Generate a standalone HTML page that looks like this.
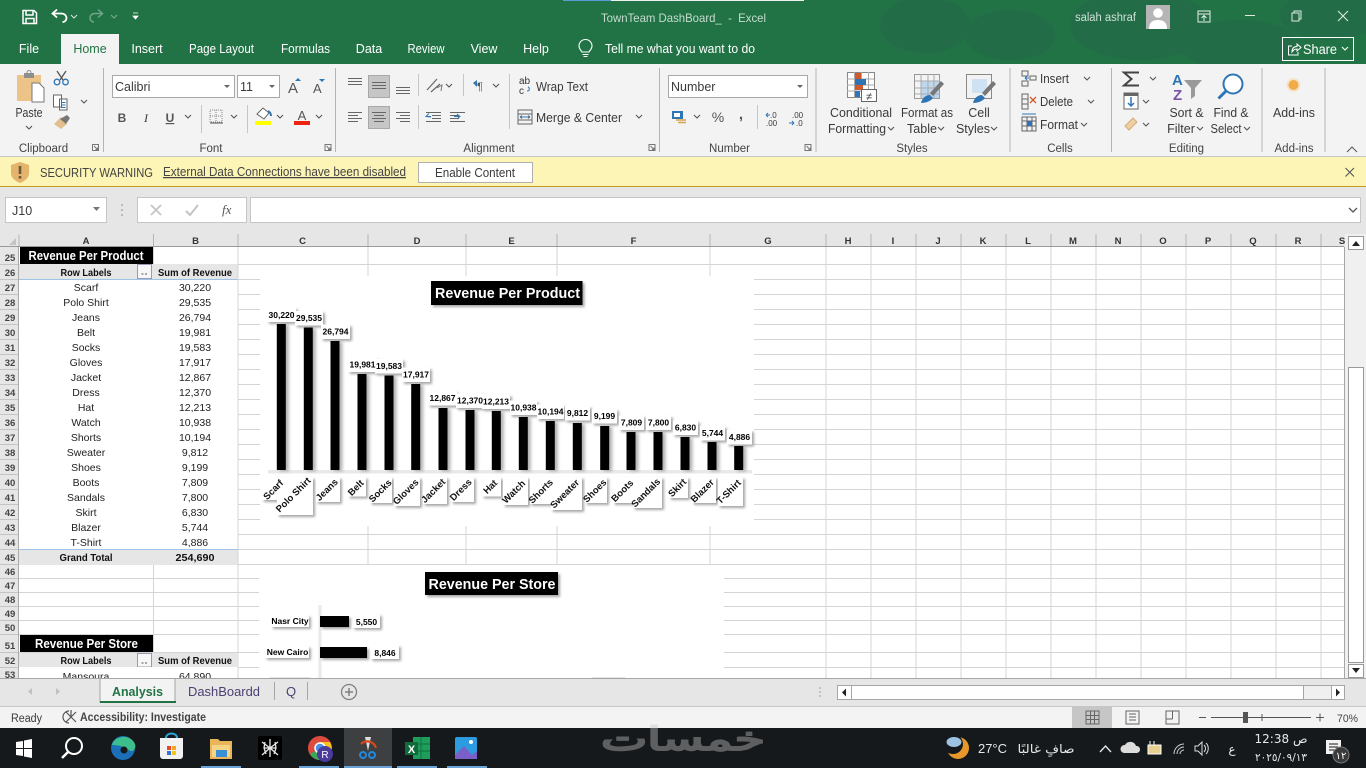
<!DOCTYPE html>
<html><head><meta charset="utf-8"><title>TownTeam DashBoard_ - Excel</title>
<style>
html,body{margin:0;padding:0;background:#e6e6e6;width:1366px;height:768px;overflow:hidden}
svg{position:absolute;left:0;top:0;display:block}
text{font-family:"Liberation Sans",sans-serif;font-size:12.5px;fill:#3a3a3a;white-space:pre}
.m{text-anchor:middle}
.e{text-anchor:end}
.w{fill:#fff}
.tab{font-size:12.5px;fill:#fff;text-anchor:middle}
.g{font-size:11.5px;fill:#444;text-anchor:middle}
.r{font-size:9.5px;fill:#444;text-anchor:middle;font-weight:bold}
.c{font-size:9.5px;fill:#333;text-anchor:middle;font-weight:bold}
.d{font-size:10.5px;fill:#222;text-anchor:middle}
.h{font-size:10px;fill:#111;text-anchor:middle;font-weight:bold}
.l{font-size:8.5px;fill:#000;text-anchor:middle;font-weight:bold}
.x{font-size:9.5px;fill:#111;text-anchor:middle;font-weight:bold}
.ic{fill:none;stroke:#666;stroke-width:1}
.ch{fill:none;stroke:#555;stroke-width:1.1}
.wh{fill:none;stroke:#fff;stroke-width:1.2}
.ar{font-family:"DejaVu Sans",sans-serif}
</style></head><body>
<svg width="1366" height="768" viewBox="0 0 1366 768" xmlns="http://www.w3.org/2000/svg">
<defs>
<filter id="s" x="-30%" y="-30%" width="170%" height="170%"><feDropShadow dx="2" dy="2" stdDeviation="1.2" flood-color="#000" flood-opacity=".35"/></filter>
<filter id="b" x="-30%" y="-10%" width="180%" height="120%"><feDropShadow dx="3" dy="1" stdDeviation="1.5" flood-color="#000" flood-opacity=".3"/></filter>
<clipPath id="ct"><rect x="590" y="728" width="190" height="40"/></clipPath>
<clipPath id="cs"><rect x="590" y="707" width="190" height="21"/></clipPath>
<path id="cv" d="M0 0l3 3 3-3" fill="none" stroke="#555" stroke-width="1.1"/>
<path id="cw" d="M0 0l3 3 3-3" fill="none" stroke="#fff" stroke-width="1.1"/>
</defs>

<!-- Title bar -->
<rect width="1366" height="64" fill="#217346"/>
<g fill="#226c47">
<ellipse cx="925" cy="25" rx="45" ry="28"/><ellipse cx="1010" cy="35" rx="45" ry="25"/><ellipse cx="1140" cy="25" rx="70" ry="35"/><ellipse cx="1240" cy="45" rx="60" ry="25"/><ellipse cx="1330" cy="15" rx="50" ry="25"/>
</g>
<rect x="563" y="0" width="48" height="1" fill="#5b9bd5"/><rect x="611" y="0" width="193" height="1" fill="#f0f0f0"/>
<!-- QAT -->
<path d="M23 10.500h11l2.500 2.500v10.500h-13.500z M26 10.500v4.500h7v-4.500 M26 23.500v-5h8v5" fill="none" stroke="#fff" stroke-width="1.500"/>
<path d="M56 11.500l-4.500 4 4.500 4 M52 15.500h8c4 0 5.500 2.500 5.500 4.500s-1.500 4-4 4" fill="none" stroke="#fff" stroke-width="1.800" transform="translate(1,-2)"/>
<use href="#cw" x="71" y="15" opacity=".8"/>
<path d="M98 11.500l4.500 4-4.500 4 M102 15.500h-7c-3.500 0-5 2.500-5 4.500s1.500 4 4 4" fill="none" stroke="#6fa588" stroke-width="1.500" transform="translate(0,-2)"/>
<use href="#cw" x="111" y="15" opacity=".4"/>
<path d="M133 13h5M133 16h5l-2.500 3z" fill="#fff" stroke="#fff" stroke-width=".8"/>
<text x="601" y="22" textLength="165" lengthAdjust="spacingAndGlyphs" style="font-size:12px;fill:#c6dccf">TownTeam DashBoard_  -  Excel</text>
<text x="1075" y="21" textLength="61" lengthAdjust="spacingAndGlyphs" style="font-size:11.500px;fill:#cfe0d6">salah ashraf</text>
<rect x="1146" y="5" width="24" height="24" fill="#b5b5b5"/>
<circle cx="1158" cy="13" r="4.800" fill="#fff"/><path d="M1149 29c0-7 4-9 9-9s9 2 9 9z" fill="#fff"/>
<path d="M1198 11h12v11h-12zM1198 14h12M1204 21v-5M1201.500 18l2.500-2.500 2.500 2.500" fill="none" stroke="#e6efe9" stroke-width="1"/>
<path d="M1245 15.500h10" stroke="#dfeae3" stroke-width="1"/>
<path d="M1292 13h7v8h-7zM1294 13v-2h7v8h-2" fill="none" stroke="#dfeae3" stroke-width="1"/>
<path d="M1338 11l10 10M1348 11l-10 10" stroke="#dfeae3" stroke-width="1.100"/>

<!-- Tabs -->
<rect x="61" y="34" width="58" height="30" fill="#f3f3f3"/>
<text class="tab" x="29" y="53" >File</text>
<text class="tab" x="90" y="53" style="fill:#217346">Home</text>
<text class="tab" x="147" y="53">Insert</text>
<text class="tab" x="221.500" y="53" textLength="65" lengthAdjust="spacingAndGlyphs">Page Layout</text>
<text class="tab" x="305.500" y="53" textLength="49" lengthAdjust="spacingAndGlyphs">Formulas</text>
<text class="tab" x="369" y="53">Data</text>
<text class="tab" x="426" y="53" textLength="37" lengthAdjust="spacingAndGlyphs">Review</text>
<text class="tab" x="484" y="53">View</text>
<text class="tab" x="536" y="53">Help</text>
<path d="M582 52c-1-2-3-3-3-6a6.500 6.500 0 0 1 13 0c0 3-2 4-3 6zM582.500 54.500h6M583.500 56.500h4" fill="none" stroke="#fff" stroke-width="1.100"/>
<text x="605" y="53" textLength="150" lengthAdjust="spacingAndGlyphs" style="font-size:12.500px;fill:#fff">Tell me what you want to do</text>
<rect x="1282.500" y="37.500" width="71" height="23" fill="none" stroke="#fff"/>
<path d="M1292 46h-3.500v9h9.500v-3 M1292 52c0-4 2-5.500 5-5.500v-2.500l4 3.500-4 3.500v-2c-2.500 0-3.500.8-5 3z" fill="none" stroke="#fff" stroke-width="1"/>
<text x="1303" y="54" textLength="34" lengthAdjust="spacingAndGlyphs" style="font-size:13.500px;font-weight:normal;fill:#fff">Share</text>
<use href="#cw" x="1342" y="47"/>

<!-- Ribbon -->
<rect y="64" width="1366" height="93" fill="#f3f3f3"/>
<g stroke="#b4b4b4" stroke-width="1"><path d="M103.500 68v84M335.500 68v84M659.500 68v84M816 68v84M1010 68v84M1111.500 68v84M1262 68v84M1325 68v84"/></g>
<!-- Clipboard -->
<rect x="17" y="75" width="24" height="26" fill="#edc487"/>
<rect x="24" y="73" width="10" height="5" fill="#8e8e8e"/><circle cx="29" cy="72.500" r="2" fill="none" stroke="#8e8e8e"/>
<path d="M32 83h7l5 5v14h-12z" fill="#fff" stroke="#777"/>
<text class="m" x="29" y="117" textLength="27" lengthAdjust="spacingAndGlyphs" style="font-size:12.500px">Paste</text>
<use href="#cv" x="26" y="126"/>
<path d="M57 71l6 9M66 71l-6 9" stroke="#555" stroke-width="1.300"/><circle cx="57" cy="82" r="2.800" fill="none" stroke="#2f75b5" stroke-width="1.300"/><circle cx="65.500" cy="82" r="2.800" fill="none" stroke="#2f75b5" stroke-width="1.300"/>
<path d="M53.500 95h8v12h-8zM59.500 99h7.500v11h-7.500z" fill="#fff" stroke="#666"/><path d="M61 102.500h4.500M61 105h4.500M61 107.500h4.500" stroke="#2f75b5"/>
<use href="#cv" x="81" y="100"/>
<path d="M54 124l7-7 6 7-6 5z" fill="#e2bf8d"/><path d="M60 119l7-4 3 3-4 6z" fill="#777"/>
<!-- Font -->
<rect x="112.500" y="75.500" width="122" height="22" fill="#fff" stroke="#a8a8a8"/>
<text x="115" y="91" style="font-size:12.500px">Calibri</text>
<path d="M224 85h6l-3 3z" fill="#666"/>
<rect x="237.500" y="75.500" width="42" height="22" fill="#fff" stroke="#a8a8a8"/>
<text x="240" y="91" style="font-size:12.500px">11</text>
<path d="M269 85h6l-3 3z" fill="#666"/>
<text x="288" y="93" style="font-size:15px;fill:#555">A</text><path d="M295 81h6l-3-3z" fill="#2f75b5"/>
<text x="313" y="93" style="font-size:13px;fill:#555">A</text><path d="M319 79h6l-3 3z" fill="#2f75b5"/>
<text class="m" x="122" y="122" style="font-size:12px;font-weight:bold;fill:#555">B</text>
<text class="m" x="146" y="122" style="font-size:12px;font-style:italic;font-family:'Liberation Serif',serif">I</text>
<text class="m" x="170" y="122" style="font-size:12px;font-weight:bold;text-decoration:underline;fill:#555">U</text>
<use href="#cv" x="185" y="115"/>
<path d="M201.500 105v28M247.500 105v28" stroke="#c6c6c6"/>
<path d="M210 110h12v12h-12zM216 110v12M210 116h12" fill="none" stroke="#888" stroke-dasharray="1 1"/><path d="M210 123h13" stroke="#555"/>
<use href="#cv" x="231" y="115"/>
<path d="M257 114l6-6 6 5-5 6z" fill="#fff" stroke="#666"/><path d="M268 111c2 1 3 3 3 5" stroke="#2f75b5" stroke-width="2" fill="none"/>
<rect x="255" y="121" width="16" height="4" fill="#ffff00"/>
<use href="#cv" x="277" y="115"/>
<text class="m" x="302" y="120" style="font-size:13px;fill:#555">A</text><rect x="294" y="121" width="16" height="4" fill="#ee2211"/>
<use href="#cv" x="316" y="115"/>
<text class="g" x="43.500" y="152" >Clipboard</text><text class="g" x="211" y="152">Font</text><text class="g" x="489" y="152">Alignment</text><text class="g" x="729.500" y="152">Number</text><text class="g" x="912" y="152">Styles</text><text class="g" x="1060" y="152">Cells</text><text class="g" x="1186.500" y="152">Editing</text><text class="g" x="1294" y="152">Add-ins</text>
<g fill="none" stroke="#777"><path id="dl" d="M92.500 144.500h6v6h-6zM94 146l3.500 3.500M97.500 147.500v2h-2"/><path d="M325 144.500h6v6h-6zM326.500 146l3.500 3.500M330 147.500v2h-2"/><path d="M649 144.500h6v6h-6zM650.500 146l3.500 3.500M654 147.500v2h-2"/><path d="M805 144.500h6v6h-6zM806.500 146l3.500 3.500M810.500 147.500v2h-2"/></g>
<!-- Alignment -->
<rect x="368.500" y="75.500" width="21" height="22" fill="#c6c6c6" stroke="#a8a8a8"/>
<rect x="368.500" y="106.500" width="21" height="22" fill="#c6c6c6" stroke="#a8a8a8"/>
<g stroke="#666" stroke-width="1"><path d="M348 78.500h14M348 81.500h14M348 84.500h14"/><path d="M372 82.500h14M372 85.500h14M372 88.500h14"/><path d="M396 87.500h14M396 90.500h14M396 93.500h14"/>
<path d="M348 112.500h14M348 115.500h10M348 118.500h14M348 121.500h10"/><path d="M372 112.500h14M374 115.500h10M372 118.500h14M374 121.500h10"/><path d="M396 112.500h14M400 115.500h10M396 118.500h14M400 121.500h10"/>
<path d="M426 112.500h15M432 115.500h9M432 118.500h9M426 121.500h15"/><path d="M450 112.500h15M450 115.500h9M450 118.500h9M450 121.500h15"/></g>
<path d="M432 117l-5-.5 3-3M427 116.500h5" stroke="#2f75b5" fill="none" transform="translate(-1,0)"/><path d="M454 116.500h5M457 114l3 2.500-3 2.500" stroke="#2f75b5" fill="none"/>
<path d="M418.500 74v22M418.500 105v24M463.500 74v22M509.500 74v55" stroke="#c6c6c6"/>
<path d="M427 90l10-11M431 92l9-8" stroke="#666" stroke-width="1.200"/><path d="M437 88l5-3-1 6" fill="none" stroke="#777"/>
<use href="#cv" x="446" y="84"/>
<path d="M473 83l4-3v7z" fill="#2f75b5"/><text x="477" y="90" style="font-size:11px;fill:#555">¶</text>
<use href="#cv" x="493" y="84"/>
<text x="519" y="84" style="font-size:10px;fill:#333">ab</text><text x="519" y="94" style="font-size:10px;fill:#333">c</text><path d="M527 91c3 0 3-3 1-4" fill="none" stroke="#2f75b5"/>
<text x="536" y="91" textLength="52" lengthAdjust="spacingAndGlyphs">Wrap Text</text>
<path d="M518 110h14v14h-14zM518 114h14M518 120h14M520 117h10M520 117l2-1.500M520 117l2 1.500M530 117l-2-1.500M530 117l-2 1.500" fill="none" stroke="#666"/><path d="M520 117h10" stroke="#2f75b5"/>
<text x="536" y="122" textLength="86" lengthAdjust="spacingAndGlyphs">Merge &amp; Center</text>
<use href="#cv" x="636" y="115"/>
<!-- Number -->
<rect x="668.500" y="75.500" width="139" height="22" fill="#fff" stroke="#a8a8a8"/>
<text x="671" y="91" style="font-size:12.500px">Number</text>
<path d="M797 85h6l-3 3z" fill="#666"/>
<rect x="672" y="111" width="11" height="8" fill="#2f75b5"/><rect x="674" y="113" width="6" height="4" fill="#fff"/><path d="M676 120h10M678 122.500h8" stroke="#d9a24c" stroke-width="1.500"/>
<use href="#cv" x="694" y="115"/>
<text class="m" x="718" y="122" style="font-size:14px;fill:#555">%</text>
<text class="m" x="741" y="119" style="font-size:15px;font-weight:bold;fill:#555">,</text>
<path d="M757.500 105v24" stroke="#c6c6c6"/>
<text x="770" y="118" style="font-size:8px">.0</text><text x="766" y="126" style="font-size:8px">.00</text><path d="M766 115h4M766 115l2-2M766 115l2 2" stroke="#2f75b5" fill="none"/>
<text x="792" y="118" style="font-size:8px">.00</text><text x="796" y="126" style="font-size:8px">.0</text><path d="M789 123h5M794 123l-2-2M794 123l-2 2" stroke="#2f75b5" fill="none"/>
<!-- Styles -->
<rect x="847.500" y="72.500" width="27" height="25" fill="#fff" stroke="#888"/>
<path d="M854.500 72v25M861.500 72v25M868.500 72v25M847 79h27M847 85h27M847 91h27" stroke="#aaa"/>
<rect x="855" y="73" width="6" height="6" fill="#d05a2c"/><rect x="855" y="79" width="11" height="6" fill="#2f75b5"/><rect x="855" y="85" width="8" height="5" fill="#d05a2c"/><rect x="855" y="91" width="5" height="6" fill="#2f75b5"/>
<rect x="861.500" y="89.500" width="15" height="12" fill="#fff" stroke="#666"/><text class="m" x="869" y="100" style="font-size:11px">≠</text>
<text class="m" x="861" y="117" textLength="62" lengthAdjust="spacingAndGlyphs">Conditional</text>
<text class="m" x="857" y="133" textLength="58" lengthAdjust="spacingAndGlyphs">Formatting</text><use href="#cv" x="888" y="127"/>
<rect x="914.500" y="74.500" width="25" height="24" fill="#f3f3f3" stroke="#999"/><rect x="921" y="81" width="18" height="17" fill="#bdd7ee"/><path d="M921 74v25M928 74v25M934 74v25M915 81h25M915 88h25M915 94h25" stroke="#aaa"/>
<path d="M930 93l11-12 3 3-11 12z" fill="#777"/><path d="M921 103c1-5 5-8 9-8l3 3c-2 3-7 5-12 5z" fill="#2f75b5"/>
<text class="m" x="927" y="117" textLength="52" lengthAdjust="spacingAndGlyphs">Format as</text>
<text class="m" x="922" y="133">Table</text><use href="#cv" x="938" y="127"/>
<rect x="966.500" y="74.500" width="25" height="24" fill="#f2f2f2" stroke="#888"/><rect x="972" y="79" width="15" height="14" fill="#cfe2f3"/>
<path d="M982 93l11-12 3 3-11 12z" fill="#777"/><path d="M973 103c1-5 5-8 9-8l3 3c-2 3-7 5-12 5z" fill="#2f75b5"/>
<text class="m" x="979" y="117">Cell</text>
<text class="m" x="973" y="133">Styles</text><use href="#cv" x="991" y="127"/>
<!-- Cells -->
<g fill="none" stroke="#666"><path d="M1022 71h6v5h-6zM1022 81h6v5h-6zM1030 76h6v4h-6z"/><path d="M1022 94h6v5h-6zM1022 104h6v5h-6zM1022 99h6v5h-6z"/><path d="M1022 117h14v14h-14zM1022 121h14M1022 126h14M1027 117v14M1032 117v14"/></g>
<path d="M1029 78h-4M1025 78l2-2M1025 78l2 2" stroke="#2f75b5" fill="none"/><path d="M1030 97l6 6M1036 97l-6 6" stroke="#d05a2c" stroke-width="1.300"/><rect x="1027" y="121" width="5" height="5" fill="#2f75b5"/><path d="M1022 114h14" stroke="#2f75b5"/>
<text x="1040" y="83" textLength="29" lengthAdjust="spacingAndGlyphs">Insert</text><use href="#cv" x="1084" y="77"/>
<text x="1040" y="106" textLength="33" lengthAdjust="spacingAndGlyphs">Delete</text><use href="#cv" x="1088" y="100"/>
<text x="1040" y="129" textLength="38" lengthAdjust="spacingAndGlyphs">Format</text><use href="#cv" x="1081" y="123"/>
<!-- Editing -->
<path d="M1139 72.500h-15l7.500 6.500-7.500 6.500h15" fill="none" stroke="#444" stroke-width="2"/><use href="#cv" x="1150" y="77"/>
<rect x="1124" y="93" width="14" height="16" fill="#fff" stroke="#666"/><rect x="1124" y="93" width="14" height="3" fill="#666"/><path d="M1131 97v9M1128 103l3 3 3-3" fill="none" stroke="#2f75b5" stroke-width="1.500"/><use href="#cv" x="1143" y="100"/>
<path d="M1125 126l8-8 4 4-8 8z" fill="#eccfa3" stroke="#d6ac7a"/><use href="#cv" x="1143" y="123"/>
<text x="1172" y="85" style="font-size:15px;font-weight:bold;fill:#2f75b5">A</text><text x="1173" y="100" style="font-size:15px;font-weight:bold;fill:#7a52a8">Z</text>
<path d="M1184 80h18l-7 8v8l-4 3v-11z" fill="#9a9a9a"/>
<text class="m" x="1186.500" y="117" textLength="34" lengthAdjust="spacingAndGlyphs">Sort &amp;</text>
<text class="m" x="1181" y="133">Filter</text><use href="#cv" x="1197" y="127"/>
<circle cx="1233" cy="84" r="9.500" fill="#fff" stroke="#2f75b5" stroke-width="2"/><path d="M1226 91l-7.500 7.500" stroke="#2f75b5" stroke-width="3"/>
<text class="m" x="1231" y="117" textLength="35" lengthAdjust="spacingAndGlyphs">Find &amp;</text>
<text class="m" x="1226" y="133" textLength="31" lengthAdjust="spacingAndGlyphs">Select</text><use href="#cv" x="1244" y="127"/>
<circle cx="1293.500" cy="85" r="5" fill="#f19b2c"/><circle cx="1293.500" cy="85" r="7" fill="#f5c97b" opacity=".35"/>
<text class="m" x="1294" y="117" textLength="42" lengthAdjust="spacingAndGlyphs">Add-ins</text>
<path d="M1347 152l5-5 5 5" fill="none" stroke="#555"/>

<!-- Warning bar -->
<rect y="156" width="1366" height="1" fill="#c6c6c6"/>
<rect y="157" width="1366" height="29" fill="#fcf5b5"/>
<rect y="186" width="1366" height="1" fill="#c09d1e"/>
<path d="M20 162l9 3v8c0 5-4 8-9 10-5-2-9-5-9-10v-8z" fill="#e5b46c"/>
<rect x="18.700" y="166" width="2.600" height="8" fill="#6b5a3a"/><rect x="18.700" y="176" width="2.600" height="2.600" fill="#6b5a3a"/>
<text x="40" y="177" textLength="113" lengthAdjust="spacingAndGlyphs" style="font-size:12.500px;fill:#444">SECURITY WARNING</text>
<text x="163" y="176" textLength="243" lengthAdjust="spacingAndGlyphs" style="font-size:12.500px;fill:#444;text-decoration:underline">External Data Connections have been disabled</text>
<rect x="418.500" y="162.500" width="114" height="20" fill="#fff" stroke="#b0b0b0"/>
<text class="m" x="475" y="177" textLength="80" lengthAdjust="spacingAndGlyphs">Enable Content</text>
<path d="M1345.500 168l8.500 8.500M1354 168l-8.500 8.500" stroke="#555" stroke-width="1.100"/>

<!-- Formula bar -->
<rect y="187" width="1366" height="47" fill="#e6e6e6"/>
<rect x="5.500" y="197.500" width="101" height="25" fill="#fff" stroke="#c6c6c6"/>
<text x="12" y="215" style="font-size:12.500px">J10</text>
<path d="M93 207h7l-3.500 4z" fill="#777"/>
<path d="M122 204v2M122 209v2M122 214v2" stroke="#aaa" stroke-width="1.500"/>
<rect x="137.500" y="197.500" width="109" height="25" fill="#fff" stroke="#c6c6c6"/>
<path d="M151 205l10 10M161 205l-10 10" stroke="#c4c4c4" stroke-width="1.800"/>
<path d="M186 211l4 4 8-10" fill="none" stroke="#c4c4c4" stroke-width="2"/>
<text x="222" y="214" style="font-size:13px;font-style:italic;font-family:'Liberation Serif',serif;fill:#555">fx</text>
<rect x="250.500" y="197.500" width="1110" height="25" fill="#fff" stroke="#c6c6c6"/>
<path d="M1349 208l4 4 4-4" fill="none" stroke="#555" stroke-width="1.300"/>

<!-- Sheet -->
<rect x="0" y="234" width="1345" height="13" fill="#e6e6e6"/>
<rect x="19" y="247" width="1325" height="431" fill="#fff"/>
<rect x="0" y="247" width="19" height="431" fill="#e6e6e6"/>
<!-- Grid -->
<path stroke="#d4d4d4" stroke-width="1" fill="none" d="M19 264.500H1344M19 279.500H1344M19 294.500H1344M19 309.500H1344M19 324.500H1344M19 339.500H1344M19 354.500H1344M19 369.500H1344M19 384.500H1344M19 399.500H1344M19 414.500H1344M19 429.500H1344M19 444.500H1344M19 459.500H1344M19 474.500H1344M19 489.500H1344M19 504.500H1344M19 519.500H1344M19 534.500H1344M19 549.500H1344M19 564.500H1344M19 578.500H1344M19 592.500H1344M19 606.500H1344M19 620.500H1344M19 634.500H1344M19 652.500H1344M19 667.500H1344
M153.500 247V678M238 247V678M368 247V678M466 247V678M557 247V678M710 247V678M826 247V678M871 247V678M916 247V678M961 247V678M1006 247V678M1051 247V678M1096 247V678M1141 247V678M1186 247V678M1231 247V678M1276 247V678M1321 247V678"/>
<!-- Table A/B blank -->
<rect x="19" y="279" width="219" height="286" fill="#fff"/>
<rect x="20" y="247" width="133" height="17" fill="#000"/>
<rect x="19" y="264" width="219" height="15" fill="#e6e6e6"/>
<path d="M19 279.500H238M19 549.500H238" stroke="#9dc3e6"/>
<rect x="19" y="550" width="219" height="15" fill="#e6e6e6"/>
<path d="M238 264V565" stroke="#d4d4d4"/>
<rect x="137.500" y="264.500" width="14" height="14" fill="#f7f7f7" stroke="#9a9ab0"/>
<path d="M141.500 274h2M145 274h2" stroke="#555"/>
<text class="m" x="86" y="260" textLength="115" lengthAdjust="spacingAndGlyphs" style="font-size:12.500px;font-weight:bold;fill:#fff">Revenue Per Product</text>
<text class="h" x="86" y="276" textLength="51" lengthAdjust="spacingAndGlyphs">Row Labels</text>
<text class="h" x="195" y="276" textLength="74" lengthAdjust="spacingAndGlyphs">Sum of Revenue</text>
<g>
<text class="d" x="86" y="291">Scarf</text><text class="d" x="195" y="291">30,220</text>
<text class="d" x="86" y="306">Polo Shirt</text><text class="d" x="195" y="306">29,535</text>
<text class="d" x="86" y="321">Jeans</text><text class="d" x="195" y="321">26,794</text>
<text class="d" x="86" y="336">Belt</text><text class="d" x="195" y="336">19,981</text>
<text class="d" x="86" y="351">Socks</text><text class="d" x="195" y="351">19,583</text>
<text class="d" x="86" y="366">Gloves</text><text class="d" x="195" y="366">17,917</text>
<text class="d" x="86" y="381">Jacket</text><text class="d" x="195" y="381">12,867</text>
<text class="d" x="86" y="396">Dress</text><text class="d" x="195" y="396">12,370</text>
<text class="d" x="86" y="411">Hat</text><text class="d" x="195" y="411">12,213</text>
<text class="d" x="86" y="426">Watch</text><text class="d" x="195" y="426">10,938</text>
<text class="d" x="86" y="441">Shorts</text><text class="d" x="195" y="441">10,194</text>
<text class="d" x="86" y="456">Sweater</text><text class="d" x="195" y="456">9,812</text>
<text class="d" x="86" y="471">Shoes</text><text class="d" x="195" y="471">9,199</text>
<text class="d" x="86" y="486">Boots</text><text class="d" x="195" y="486">7,809</text>
<text class="d" x="86" y="501">Sandals</text><text class="d" x="195" y="501">7,800</text>
<text class="d" x="86" y="516">Skirt</text><text class="d" x="195" y="516">6,830</text>
<text class="d" x="86" y="531">Blazer</text><text class="d" x="195" y="531">5,744</text>
<text class="d" x="86" y="546">T-Shirt</text><text class="d" x="195" y="546">4,886</text>
</g>
<text class="h" x="86" y="561" textLength="53" lengthAdjust="spacingAndGlyphs">Grand Total</text>
<text class="h" x="195" y="561" textLength="39" lengthAdjust="spacingAndGlyphs">254,690</text>
<rect x="20" y="635" width="133" height="17" fill="#000"/>
<rect x="19" y="653" width="219" height="14" fill="#e6e6e6"/>
<rect x="137.500" y="653.500" width="14" height="13.500" fill="#f7f7f7" stroke="#9a9ab0"/>
<path d="M141.500 663h2M145 663h2" stroke="#555"/>
<text class="m" x="86.500" y="648" textLength="103" lengthAdjust="spacingAndGlyphs" style="font-size:12.500px;font-weight:bold;fill:#fff">Revenue Per Store</text>
<text class="h" x="86" y="664" textLength="51" lengthAdjust="spacingAndGlyphs">Row Labels</text>
<text class="h" x="195" y="664" textLength="74" lengthAdjust="spacingAndGlyphs">Sum of Revenue</text>
<rect x="19" y="667" width="219" height="11" fill="#fff"/>
<path d="M238 667V678" stroke="#d4d4d4"/>
<text class="d" x="86" y="680">Mansoura</text><text class="d" x="195" y="680">64,890</text>

<!-- Chart 1 -->
<rect x="260" y="276" width="494" height="250" fill="#fff"/>
<rect x="431" y="281" width="151.500" height="24" fill="#000" filter="url(#s)"/>
<text class="m" x="507.500" y="298" textLength="145" lengthAdjust="spacingAndGlyphs" style="font-size:15px;font-weight:bold;fill:#fff">Revenue Per Product</text>
<rect x="268" y="470" width="484" height="3.500" fill="#e9e9e9"/>
<g fill="#000" filter="url(#b)">
<rect x="276.800" y="324" width="9" height="146"/><rect x="303.800" y="327.500" width="9" height="142.500"/><rect x="330.500" y="341" width="9" height="129"/><rect x="357.500" y="374" width="9" height="96"/><rect x="384.500" y="375.500" width="9" height="94.500"/><rect x="411.200" y="384" width="9" height="86"/><rect x="438.500" y="408" width="9" height="62"/><rect x="465.500" y="410" width="9" height="60"/><rect x="491.800" y="411" width="9" height="59"/><rect x="518.800" y="417" width="9" height="53"/><rect x="545.800" y="421" width="9" height="49"/><rect x="572.800" y="423" width="9" height="47"/><rect x="600.200" y="426" width="9" height="44"/><rect x="626.500" y="432" width="9" height="38"/><rect x="653.500" y="432" width="9" height="38"/><rect x="680.500" y="437" width="9" height="33"/><rect x="707.500" y="442" width="9" height="28"/><rect x="734.200" y="446" width="9" height="24"/>
</g>
<g fill="#fff" filter="url(#s)">
<rect x="267" y="307.500" width="29" height="14.500"/><rect x="295" y="311" width="28" height="14.500"/><rect x="321" y="324.500" width="29" height="14.500"/><rect x="348" y="357.500" width="29" height="14.500"/><rect x="375" y="359" width="28" height="14.500"/><rect x="402" y="367.500" width="28" height="14.500"/><rect x="428" y="391" width="29" height="14.500"/><rect x="456" y="393.500" width="28" height="14.500"/><rect x="482" y="394.500" width="28" height="14.500"/><rect x="510" y="400.500" width="27" height="14.500"/><rect x="537" y="404.500" width="27" height="14.500"/><rect x="565" y="406" width="25" height="14.500"/><rect x="592" y="409" width="25" height="14.500"/><rect x="619" y="415.500" width="25" height="14.500"/><rect x="646" y="415.500" width="25" height="14.500"/><rect x="673" y="420.500" width="25" height="14.500"/><rect x="700" y="426" width="25" height="14.500"/><rect x="727" y="430" width="25" height="14.500"/>
</g>
<g>
<text class="l" x="281.500" y="318">30,220</text><text class="l" x="309" y="321">29,535</text><text class="l" x="335.500" y="334.500">26,794</text><text class="l" x="362.500" y="367.500">19,981</text><text class="l" x="389" y="369">19,583</text><text class="l" x="416" y="377.500">17,917</text><text class="l" x="442.500" y="401">12,867</text><text class="l" x="470" y="403.500">12,370</text><text class="l" x="496" y="404.500">12,213</text><text class="l" x="523.500" y="410.500">10,938</text><text class="l" x="550.500" y="414.500">10,194</text><text class="l" x="577.500" y="416">9,812</text><text class="l" x="604.500" y="419">9,199</text><text class="l" x="631.500" y="425.500">7,809</text><text class="l" x="658.500" y="425.500">7,800</text><text class="l" x="685.500" y="430.500">6,830</text><text class="l" x="712.500" y="436">5,744</text><text class="l" x="739.500" y="440">4,886</text>
</g>
<g fill="#fff" filter="url(#s)">
<rect x="262" y="477" width="24" height="23"/><rect x="277" y="477" width="36" height="38"/><rect x="316" y="477" width="24" height="25"/><rect x="348" y="477" width="18" height="19.500"/><rect x="370" y="477" width="22" height="26"/><rect x="394" y="477" width="26" height="29"/><rect x="423" y="477" width="24" height="27"/><rect x="451" y="477" width="23" height="25"/><rect x="482" y="477" width="19" height="19.500"/><rect x="503" y="477" width="25" height="28"/><rect x="530" y="477" width="25" height="27"/><rect x="551" y="477" width="31" height="33"/><rect x="585" y="477" width="22" height="26"/><rect x="613" y="477" width="22" height="26"/><rect x="633" y="477" width="29" height="31"/><rect x="669" y="477" width="19" height="21"/><rect x="692" y="477" width="24" height="26"/><rect x="718" y="477" width="25" height="29"/>
</g>
<g>
<text class="x" transform="translate(275.500,492) rotate(-45)">Scarf</text>
<text class="x" transform="translate(295.500,497) rotate(-45)">Polo Shirt</text>
<text class="x" transform="translate(329,492) rotate(-45)">Jeans</text>
<text class="x" transform="translate(358,490) rotate(-45)">Belt</text>
<text class="x" transform="translate(382.500,493) rotate(-45)">Socks</text>
<text class="x" transform="translate(408,494) rotate(-45)">Gloves</text>
<text class="x" transform="translate(435.500,493) rotate(-45)">Jacket</text>
<text class="x" transform="translate(463,492) rotate(-45)">Dress</text>
<text class="x" transform="translate(492.500,489) rotate(-45)">Hat</text>
<text class="x" transform="translate(516,494) rotate(-45)">Watch</text>
<text class="x" transform="translate(543,493.500) rotate(-45)">Shorts</text>
<text class="x" transform="translate(567,496) rotate(-45)">Sweater</text>
<text class="x" transform="translate(597,493) rotate(-45)">Shoes</text>
<text class="x" transform="translate(624.500,493) rotate(-45)">Boots</text>
<text class="x" transform="translate(648,495) rotate(-45)">Sandals</text>
<text class="x" transform="translate(679.500,490) rotate(-45)">Skirt</text>
<text class="x" transform="translate(704.500,493) rotate(-45)">Blazer</text>
<text class="x" transform="translate(731,494) rotate(-45)">T-Shirt</text>
</g>

<!-- Chart 2 -->
<rect x="259" y="565" width="465" height="113" fill="#fff"/>
<rect x="425" y="572" width="133" height="23" fill="#000" filter="url(#s)"/>
<text class="m" x="492" y="589" textLength="127" lengthAdjust="spacingAndGlyphs" style="font-size:15px;font-weight:bold;fill:#fff">Revenue Per Store</text>
<rect x="318.500" y="605" width="3" height="73" fill="#e9e9e9"/>
<rect x="320" y="616" width="29" height="11" fill="#000" filter="url(#s)"/>
<rect x="320" y="647" width="47" height="11" fill="#000" filter="url(#s)"/>
<g fill="#fff" filter="url(#s)"><rect x="271" y="615" width="38" height="12"/><rect x="265" y="646" width="44" height="12"/><rect x="352.500" y="614" width="27.500" height="14"/><rect x="370.500" y="645" width="28.500" height="14"/></g>
<text class="l" x="290" y="624">Nasr City</text><text class="l" x="287.500" y="655">New Cairo</text><text class="l" x="366.500" y="625">5,550</text><text class="l" x="385" y="656">8,846</text>
<path d="M270 677.500h40M592 677.500h33" stroke="#e4e4e4"/>

<!-- Row/col headers -->
<path d="M19 234.500V247M153.500 234V247M238 234V247M368 234V247M466 234V247M557 234V247M710 234V247M826 234V247M871 234V247M916 234V247M961 234V247M1006 234V247M1051 234V247M1096 234V247M1141 234V247M1186 234V247M1231 234V247M1276 234V247M1321 234V247" stroke="#b4b4b4"/>
<path d="M0 246.500H1344" stroke="#9a9a9a"/><path d="M18.500 247V678" stroke="#ababab"/>
<path d="M16 238v7h-7z" fill="#c4c4c4"/>
<text class="c" x="86" y="244">A</text><text class="c" x="195.500" y="244">B</text><text class="c" x="302.500" y="244">C</text><text class="c" x="417" y="244">D</text><text class="c" x="511.500" y="244">E</text><text class="c" x="633.500" y="244">F</text><text class="c" x="768" y="244">G</text><text class="c" x="848" y="244">H</text><text class="c" x="893" y="244">I</text><text class="c" x="938" y="244">J</text><text class="c" x="983" y="244">K</text><text class="c" x="1028" y="244">L</text><text class="c" x="1073" y="244">M</text><text class="c" x="1118" y="244">N</text><text class="c" x="1163" y="244">O</text><text class="c" x="1208" y="244">P</text><text class="c" x="1253" y="244">Q</text><text class="c" x="1298" y="244">R</text><text class="c" x="1342" y="244">S</text>
<g>
<path stroke="#c4c4c4" d="M0 264.500h18M0 279.500h18M0 294.500h18M0 309.500h18M0 324.500h18M0 339.500h18M0 354.500h18M0 369.500h18M0 384.500h18M0 399.500h18M0 414.500h18M0 429.500h18M0 444.500h18M0 459.500h18M0 474.500h18M0 489.500h18M0 504.500h18M0 519.500h18M0 534.500h18M0 549.500h18M0 564.500h18M0 578.500h18M0 592.500h18M0 606.500h18M0 620.500h18M0 634.500h18M0 652.500h18M0 667.500h18"/>
<text class="r" x="10" y="261">25</text><text class="r" x="10" y="276">26</text><text class="r" x="10" y="291">27</text><text class="r" x="10" y="306">28</text><text class="r" x="10" y="321">29</text><text class="r" x="10" y="336">30</text><text class="r" x="10" y="351">31</text><text class="r" x="10" y="366">32</text><text class="r" x="10" y="381">33</text><text class="r" x="10" y="396">34</text><text class="r" x="10" y="411">35</text><text class="r" x="10" y="426">36</text><text class="r" x="10" y="441">37</text><text class="r" x="10" y="456">38</text><text class="r" x="10" y="471">39</text><text class="r" x="10" y="486">40</text><text class="r" x="10" y="501">41</text><text class="r" x="10" y="516">42</text><text class="r" x="10" y="531">43</text><text class="r" x="10" y="546">44</text><text class="r" x="10" y="561">45</text><text class="r" x="10" y="575">46</text><text class="r" x="10" y="589">47</text><text class="r" x="10" y="603">48</text><text class="r" x="10" y="617">49</text><text class="r" x="10" y="631">50</text><text class="r" x="10" y="649">51</text><text class="r" x="10" y="664">52</text><text class="r" x="10" y="678">53</text>
</g>

<!-- V scroll -->
<rect x="1345" y="234" width="21" height="444" fill="#f0f0f0"/>
<path d="M1344.500 247V678" stroke="#a6a6a6"/>
<rect x="1348.500" y="236.500" width="15" height="13" fill="#fff" stroke="#999"/><path d="M1352 246h8l-4-5z" fill="#222"/>
<rect x="1348.500" y="367.500" width="15" height="295" fill="#fff" stroke="#999"/>
<rect x="1348.500" y="664.500" width="15" height="13" fill="#fff" stroke="#999"/><path d="M1352 668h8l-4 5z" fill="#222"/>

<!-- Sheet tabs -->
<rect y="678" width="1366" height="28" fill="#e6e6e6"/>
<path d="M0 678.500H1366" stroke="#a6a6a6"/>
<path d="M32 688v7l-4-3.500zM56 688v7l4-3.500z" fill="#c0c0c0"/>
<rect x="100" y="679" width="75" height="24" fill="#f3f3f3"/>
<path d="M100 679v24M175 679v24" stroke="#a6a6a6"/><rect x="100" y="701" width="76" height="2" fill="#217346"/>
<text class="m" x="137.500" y="696" textLength="51" lengthAdjust="spacingAndGlyphs" style="font-size:13px;font-weight:bold;fill:#217346">Analysis</text>
<text class="m" x="224" y="696" textLength="72" lengthAdjust="spacingAndGlyphs" style="font-size:13px;fill:#4c3f72">DashBoardd</text>
<path d="M274.500 682v18M307.500 682v18" stroke="#a6a6a6"/>
<text class="m" x="291" y="696" style="font-size:13px;fill:#4c3f72">Q</text>
<circle cx="349" cy="692" r="7.500" fill="none" stroke="#808080" stroke-width="1.300"/><path d="M345 692h8M349 688v8" stroke="#808080" stroke-width="1.500"/>
<path d="M820 687v2M820 691v2M820 695v2" stroke="#aaa" stroke-width="1.200"/>
<rect x="837.500" y="685.500" width="507" height="14" fill="#f0f0f0" stroke="#a6a6a6"/>
<rect x="837.500" y="685.500" width="14" height="14" fill="#fff" stroke="#a6a6a6"/><path d="M846 688.500v8l-4-4z" fill="#222"/>
<rect x="851.500" y="685.500" width="452" height="14" fill="#fff" stroke="#a6a6a6"/>
<rect x="1331.500" y="685.500" width="13" height="14" fill="#fff" stroke="#a6a6a6"/><path d="M1336 688.500v8l4-4z" fill="#222"/>

<!-- Status -->
<rect y="706" width="1366" height="22" fill="#f3f3f3"/>
<path d="M0 706.500H1366" stroke="#c6c6c6"/>
<text x="11" y="722" textLength="31" lengthAdjust="spacingAndGlyphs" style="font-size:11.500px">Ready</text>
<path d="M69 711a6 6 0 1 0 0 12M66 712l10 10M76 712l-10 10M71 710v7" fill="none" stroke="#555" stroke-width="1.200"/>
<text x="80" y="721" textLength="126" lengthAdjust="spacingAndGlyphs" style="font-size:11.500px;font-weight:bold;fill:#444">Accessibility: Investigate</text>
<rect x="1072" y="707" width="40" height="21" fill="#c6c6c6"/>
<path d="M1086 711h13v13h-13zM1086 715.500h13M1086 719.500h13M1090.500 711v13M1094.500 711v13" fill="none" stroke="#666"/>
<path d="M1126 711h13v13h-13zM1129 714h7M1129 717h7M1129 720h7" fill="none" stroke="#666"/>
<path d="M1166 711h13v13h-13zM1172.500 711v8M1166 719h6.500" fill="none" stroke="#666"/>
<path d="M1199 717.500h7M1211 717.500h100M1316 717.500h8M1320 713.500v8M1262 714v7" stroke="#555"/>
<rect x="1243" y="712" width="5" height="11" fill="#555"/>
<text x="1337" y="722" textLength="21" lengthAdjust="spacingAndGlyphs" style="font-size:11px;fill:#444">70%</text>

<!-- Taskbar -->
<rect y="728" width="1366" height="40" fill="#15191b"/>
<rect x="344" y="728" width="48" height="40" fill="#3d3f40"/>
<g fill="#6aa3d8"><rect x="201" y="766" width="40" height="2"/><rect x="299" y="766" width="40" height="2"/><rect x="344" y="766" width="48" height="2"/><rect x="397" y="766" width="40" height="2"/><rect x="447" y="766" width="40" height="2"/></g>
<path d="M16 742l7-1v7h-7zM24 740.500l8-1.500v9h-8zM16 749h7v7l-7-1zM24 749h8v9l-8-1.500z" fill="#fff"/>
<circle cx="74" cy="746" r="8" fill="none" stroke="#fff" stroke-width="2"/><path d="M68 752l-6 6" stroke="#fff" stroke-width="2.500"/>
<circle cx="123" cy="748" r="12" fill="#1a6fb8"/><path d="M112 745c2-9 18-12 23-1 1 3 0 6-3 7-3 0-4-2-6-3-4-2-9-3-14-3z" fill="#3cbf8a"/><circle cx="124" cy="750" r="3.500" fill="#15191b"/>
<path d="M160 738h23v18a3 3 0 0 1-3 3h-17a3 3 0 0 1-3-3z" fill="#f2f2f2"/><path d="M166 738c0-6 11-6 11 0" fill="none" stroke="#2aa6df" stroke-width="2"/><rect x="167" y="746" width="4" height="4" fill="#e8452c"/><rect x="172" y="746" width="4" height="4" fill="#f5a623"/><rect x="167" y="751" width="4" height="4" fill="#2f75d6"/><rect x="172" y="751" width="4" height="4" fill="#f5c518"/>
<path d="M210 739h8l2 2h12v18h-22z" fill="#e9b45a"/><rect x="212" y="745" width="18" height="12" fill="#f5d584"/><rect x="216" y="750" width="11" height="7" fill="#3b8fd4"/>
<rect x="258" y="736" width="24" height="24" fill="#000" rx="2"/><path d="M270 739v18M262 742l8 6 8-6M262 755l8-7 8 7M264 748h12M265 742l-1 6 2 6M275 742l1 6-2 6" fill="none" stroke="#e8e8e8" stroke-width="1.300"/>
<circle cx="320" cy="748" r="12" fill="#dd4b3e"/><path d="M320 748l-10 6a12 12 0 0 0 12 6z" fill="#3ba857"/><path d="M320 748l10 6a12 12 0 0 0 0-12l-10 0z" fill="#f6c21c"/><circle cx="320" cy="748" r="5" fill="#4e8fe8" stroke="#fff" stroke-width="1.500"/>
<circle cx="325" cy="754" r="8" fill="#4a3a9e"/><text class="m" x="325" y="758" style="font-size:10px;fill:#fff">R</text>
<path d="M365 737l3 14 3-14z" fill="#ddd"/><path d="M361 744a9 9 0 0 1 15 4" fill="none" stroke="#d9481c" stroke-width="2.200"/><circle cx="363" cy="755" r="3" fill="none" stroke="#1f8ae0" stroke-width="2"/><circle cx="372" cy="755" r="3" fill="none" stroke="#1f8ae0" stroke-width="2"/>
<rect x="413" y="737" width="17" height="22" fill="#1f9e5b"/><path d="M413 744h17M413 751h17M421 737v22" stroke="#127040"/><rect x="405" y="742" width="13" height="13" fill="#0f6b3a"/><text class="m" x="411.500" y="753" style="font-size:11px;font-weight:bold;fill:#fff">X</text>
<rect x="455" y="737" width="22" height="22" rx="2" fill="#2d9be0"/><path d="M455 755l9-9 8 9 5-4v8h-22z" fill="#7a5fc8"/><circle cx="471" cy="742" r="2" fill="#fff"/>
<!-- watermark -->
<g clip-path="url(#ct)"><text class="ar" x="683" y="750" text-anchor="middle" style="font-size:32px;fill:#5e5f60;stroke:#5e5f60;stroke-width:2" textLength="164" lengthAdjust="spacingAndGlyphs">خمسات</text></g>
<g clip-path="url(#cs)"><text class="ar" x="683" y="750" text-anchor="middle" style="font-size:32px;fill:#e0e0e0;stroke:#e0e0e0;stroke-width:2" textLength="164" lengthAdjust="spacingAndGlyphs">خمسات</text></g>
<!-- tray -->
<circle cx="958" cy="748" r="11" fill="#e8972b"/><circle cx="953" cy="744" r="10" fill="#15191b"/><ellipse cx="954" cy="742" rx="7.500" ry="5" fill="#9cc3e4"/>
<text x="978" y="753" textLength="29" lengthAdjust="spacingAndGlyphs" style="font-size:13px;fill:#e8e8e8">27°C</text>
<text class="ar" x="1046" y="753" text-anchor="middle" textLength="57" lengthAdjust="spacingAndGlyphs" style="font-size:12px;fill:#e8e8e8">صافٍ غالبًا</text>
<path d="M1100 752l5.500-6 5.500 6" fill="none" stroke="#e8e8e8" stroke-width="1.300"/>
<path d="M1124 753a4 4 0 0 1 1-8 6 6 0 0 1 11 1 3.500 3.500 0 0 1 1 7z" fill="#dcdcdc"/>
<rect x="1148" y="745" width="13" height="9" fill="#e8d090" stroke="#fff"/><path d="M1150 745v-4M1154 745v-4" stroke="#fff"/>
<path d="M1174 754a10 10 0 0 1 10-10M1177 754a7 7 0 0 1 7-7M1180 754a4 4 0 0 1 4-4" fill="none" stroke="#cfcfcf" stroke-width="1"/>
<path d="M1195 746h3l4-4v13l-4-4h-3zM1204 745c2 2 2 5 0 7M1206 743c3 3 3 8 0 11" fill="none" stroke="#dcdcdc"/>
<text class="m ar" x="1232" y="753" style="font-size:12px;fill:#e8e8e8">ع</text>
<text class="m ar" x="1281" y="743" style="font-size:12px;fill:#e8e8e8">12:38 ص</text>
<text class="m ar" x="1281" y="761" textLength="52" lengthAdjust="spacingAndGlyphs" style="font-size:11px;fill:#e8e8e8">٢٠٢٥/٠٩/١٣</text>
<path d="M1326 740h15v14h-15z" fill="#f2f2f2"/><path d="M1329 744h9M1329 747h9M1329 750h6" stroke="#15191b"/>
<circle cx="1341" cy="755" r="8" fill="#3a3a3a" stroke="#777"/><text class="m ar" x="1341" y="759" style="font-size:10px;fill:#fff">١٢</text>
</svg>
</body></html>
